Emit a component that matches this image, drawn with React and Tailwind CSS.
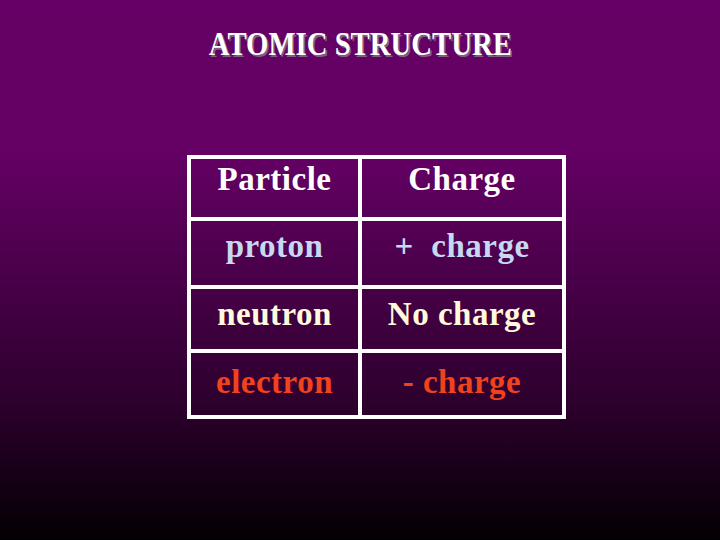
export default function App() {
  const font = { fontFamily: '"Liberation Serif", "Times New Roman", serif' };
  return (
    <div
      className="w-[720px] h-[540px] flex flex-col bg-[linear-gradient(to_bottom,#660066_0%,#650065_28%,#2e002e_74%,#030003_100%)] overflow-hidden"
      style={font}
    >
      <div className="pt-[27px] h-[61px] flex justify-center">
        <span className="inline-block text-[34px] leading-none font-bold text-white scale-x-[0.845] [text-shadow:2px_2px_0_#7d627f] whitespace-nowrap">
          ATOMIC STRUCTURE
        </span>
      </div>
      <div className="mt-[94px] ml-[187px] w-[379px] border-4 border-white flex flex-col text-[33px] leading-none font-bold tracking-[0.5px]">
        <div className="flex h-[58px]">
          <div className="w-[171px] border-r-4 border-white pt-[4px] text-center text-white">Particle</div>
          <div className="w-[200px] pt-[4px] text-center text-white">Charge</div>
        </div>
        <div className="flex h-[68px] border-t-4 border-white">
          <div className="w-[171px] border-r-4 border-white pt-[9px] text-center text-[#c6d9f1]">proton</div>
          <div className="w-[200px] pt-[9px] text-center text-[#c6d9f1] whitespace-pre">+  charge</div>
        </div>
        <div className="flex h-[64px] border-t-4 border-white">
          <div className="w-[171px] border-r-4 border-white pt-[9px] text-center text-[#fffadc]">neutron</div>
          <div className="w-[200px] pt-[9px] text-center text-[#fffadc]">No charge</div>
        </div>
        <div className="flex h-[66px] border-t-4 border-white">
          <div className="w-[171px] border-r-4 border-white pt-[13px] text-center text-[#f0421c]">electron</div>
          <div className="w-[200px] pt-[13px] text-center text-[#f0421c]">- charge</div>
        </div>
      </div>
    </div>
  );
}
